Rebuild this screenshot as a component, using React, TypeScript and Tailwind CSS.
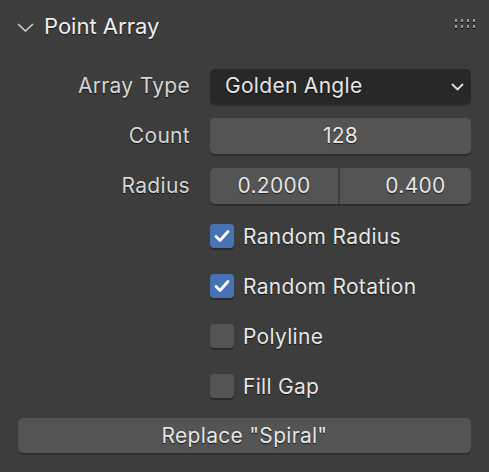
import React from "react"

const font = { fontFamily: "Inter, 'Noto Sans', sans-serif" }
const shadow = "[text-shadow:0_1px_1px_rgba(0,0,0,0.7)] tracking-[0.3px]"

function Check() {
  return (
    <svg width="16" height="14" viewBox="0 0 16 14" fill="none">
      <path d="M2 7.5 L6 11.5 L14 2.5" stroke="white" strokeWidth="2.8" strokeLinecap="round" strokeLinejoin="round" />
    </svg>
  )
}

function CheckRow({ label, checked }: { label: string; checked: boolean }) {
  return (
    <div className="h-[50px] flex items-center pl-[210px]">
      <div
        className={`w-[24px] h-[24px] rounded-[4px] flex items-center justify-center shadow-[0_2px_0_#2b2b2b] ${
          checked ? "bg-[#4772b3]" : "bg-[#545454]"
        }`}
      >
        {checked && <Check />}
      </div>
      <span className={`ml-[9px] mt-[1px] text-[21px] text-[#e6e6e6] ${shadow}`}>{label}</span>
    </div>
  )
}

function Row({ label, children }: { label: string; children: React.ReactNode }) {
  return (
    <div className="h-[50px] flex items-center">
      <div className={`w-[190px] text-right text-[21px] text-[#d6d6d6] ${shadow}`}>{label}</div>
      <div className="ml-[20px] w-[261px]">{children}</div>
    </div>
  )
}

export default function App() {
  return (
    <div className="w-[489px] h-[472px] bg-[#3d3d3d] overflow-hidden select-none" style={font}>
      {/* Header */}
      <div className="h-[61px] flex items-start pt-[13px] pl-[17px] pr-[14px]">
        <svg width="17" height="9" viewBox="0 0 17 9" fill="none" className="mt-[10px]">
          <path d="M1 1 L8.5 8 L16 1" stroke="#cfcfcf" strokeWidth="1.6" />
        </svg>
        <span className={`ml-[10px] text-[22px] leading-[26px] text-[#efefef] [text-shadow:0_1px_1px_rgba(0,0,0,0.7)]`}>
          Point Array
        </span>
        <div className="ml-auto mt-[6px] grid grid-cols-4 gap-x-[4px] gap-y-[3px]">
          {Array.from({ length: 8 }).map((_, i) => (
            <div key={i} className="w-[2px] h-[3px] bg-[#9a9a9a] shadow-[0_1px_0_#000]" />
          ))}
        </div>
      </div>

      <Row label="Array Type">
        <div className="h-[35px] rounded-[5px] bg-[#282828] shadow-[0_2px_0_#2e2e2e] flex items-center pl-[15px] pr-[7px]">
          <span className={`text-[21px] text-[#e6e6e6] ${shadow}`}>Golden Angle</span>
          <svg width="13" height="8" viewBox="0 0 13 8" fill="none" className="ml-auto mt-[2px]">
            <path d="M1 1 L6.5 6.5 L12 1" stroke="#e0e0e0" strokeWidth="1.8" />
          </svg>
        </div>
      </Row>

      <Row label="Count">
        <div className="h-[36px] rounded-[5px] bg-[#545454] shadow-[0_2px_0_#2e2e2e] flex items-center justify-center">
          <span className={`text-[21px] text-[#e6e6e6] ${shadow}`}>128</span>
        </div>
      </Row>

      <Row label="Radius">
        <div className="h-[36px] flex gap-[2px] shadow-[0_2px_0_#2e2e2e] rounded-[5px]">
          <div className="w-[128px] rounded-l-[5px] bg-[#545454] flex items-center justify-center">
            <span className={`text-[21px] text-[#e6e6e6] ${shadow}`}>0.2000</span>
          </div>
          <div className="flex-1 rounded-r-[5px] bg-[#545454] flex items-center justify-center pl-[20px]">
            <span className={`text-[21px] text-[#e6e6e6] ${shadow}`}>0.400</span>
          </div>
        </div>
      </Row>

      <CheckRow label="Random Radius" checked />
      <CheckRow label="Random Rotation" checked />
      <CheckRow label="Polyline" checked={false} />
      <CheckRow label="Fill Gap" checked={false} />

      <div className="pt-[7px] pl-[18px]">
        <div className="w-[453px] h-[35px] rounded-[5px] bg-[#545454] shadow-[0_2px_0_#2e2e2e] flex items-center justify-center">
          <span className={`text-[21px] text-[#e6e6e6] ${shadow}`}>Replace "Spiral"</span>
        </div>
      </div>
    </div>
  )
}
